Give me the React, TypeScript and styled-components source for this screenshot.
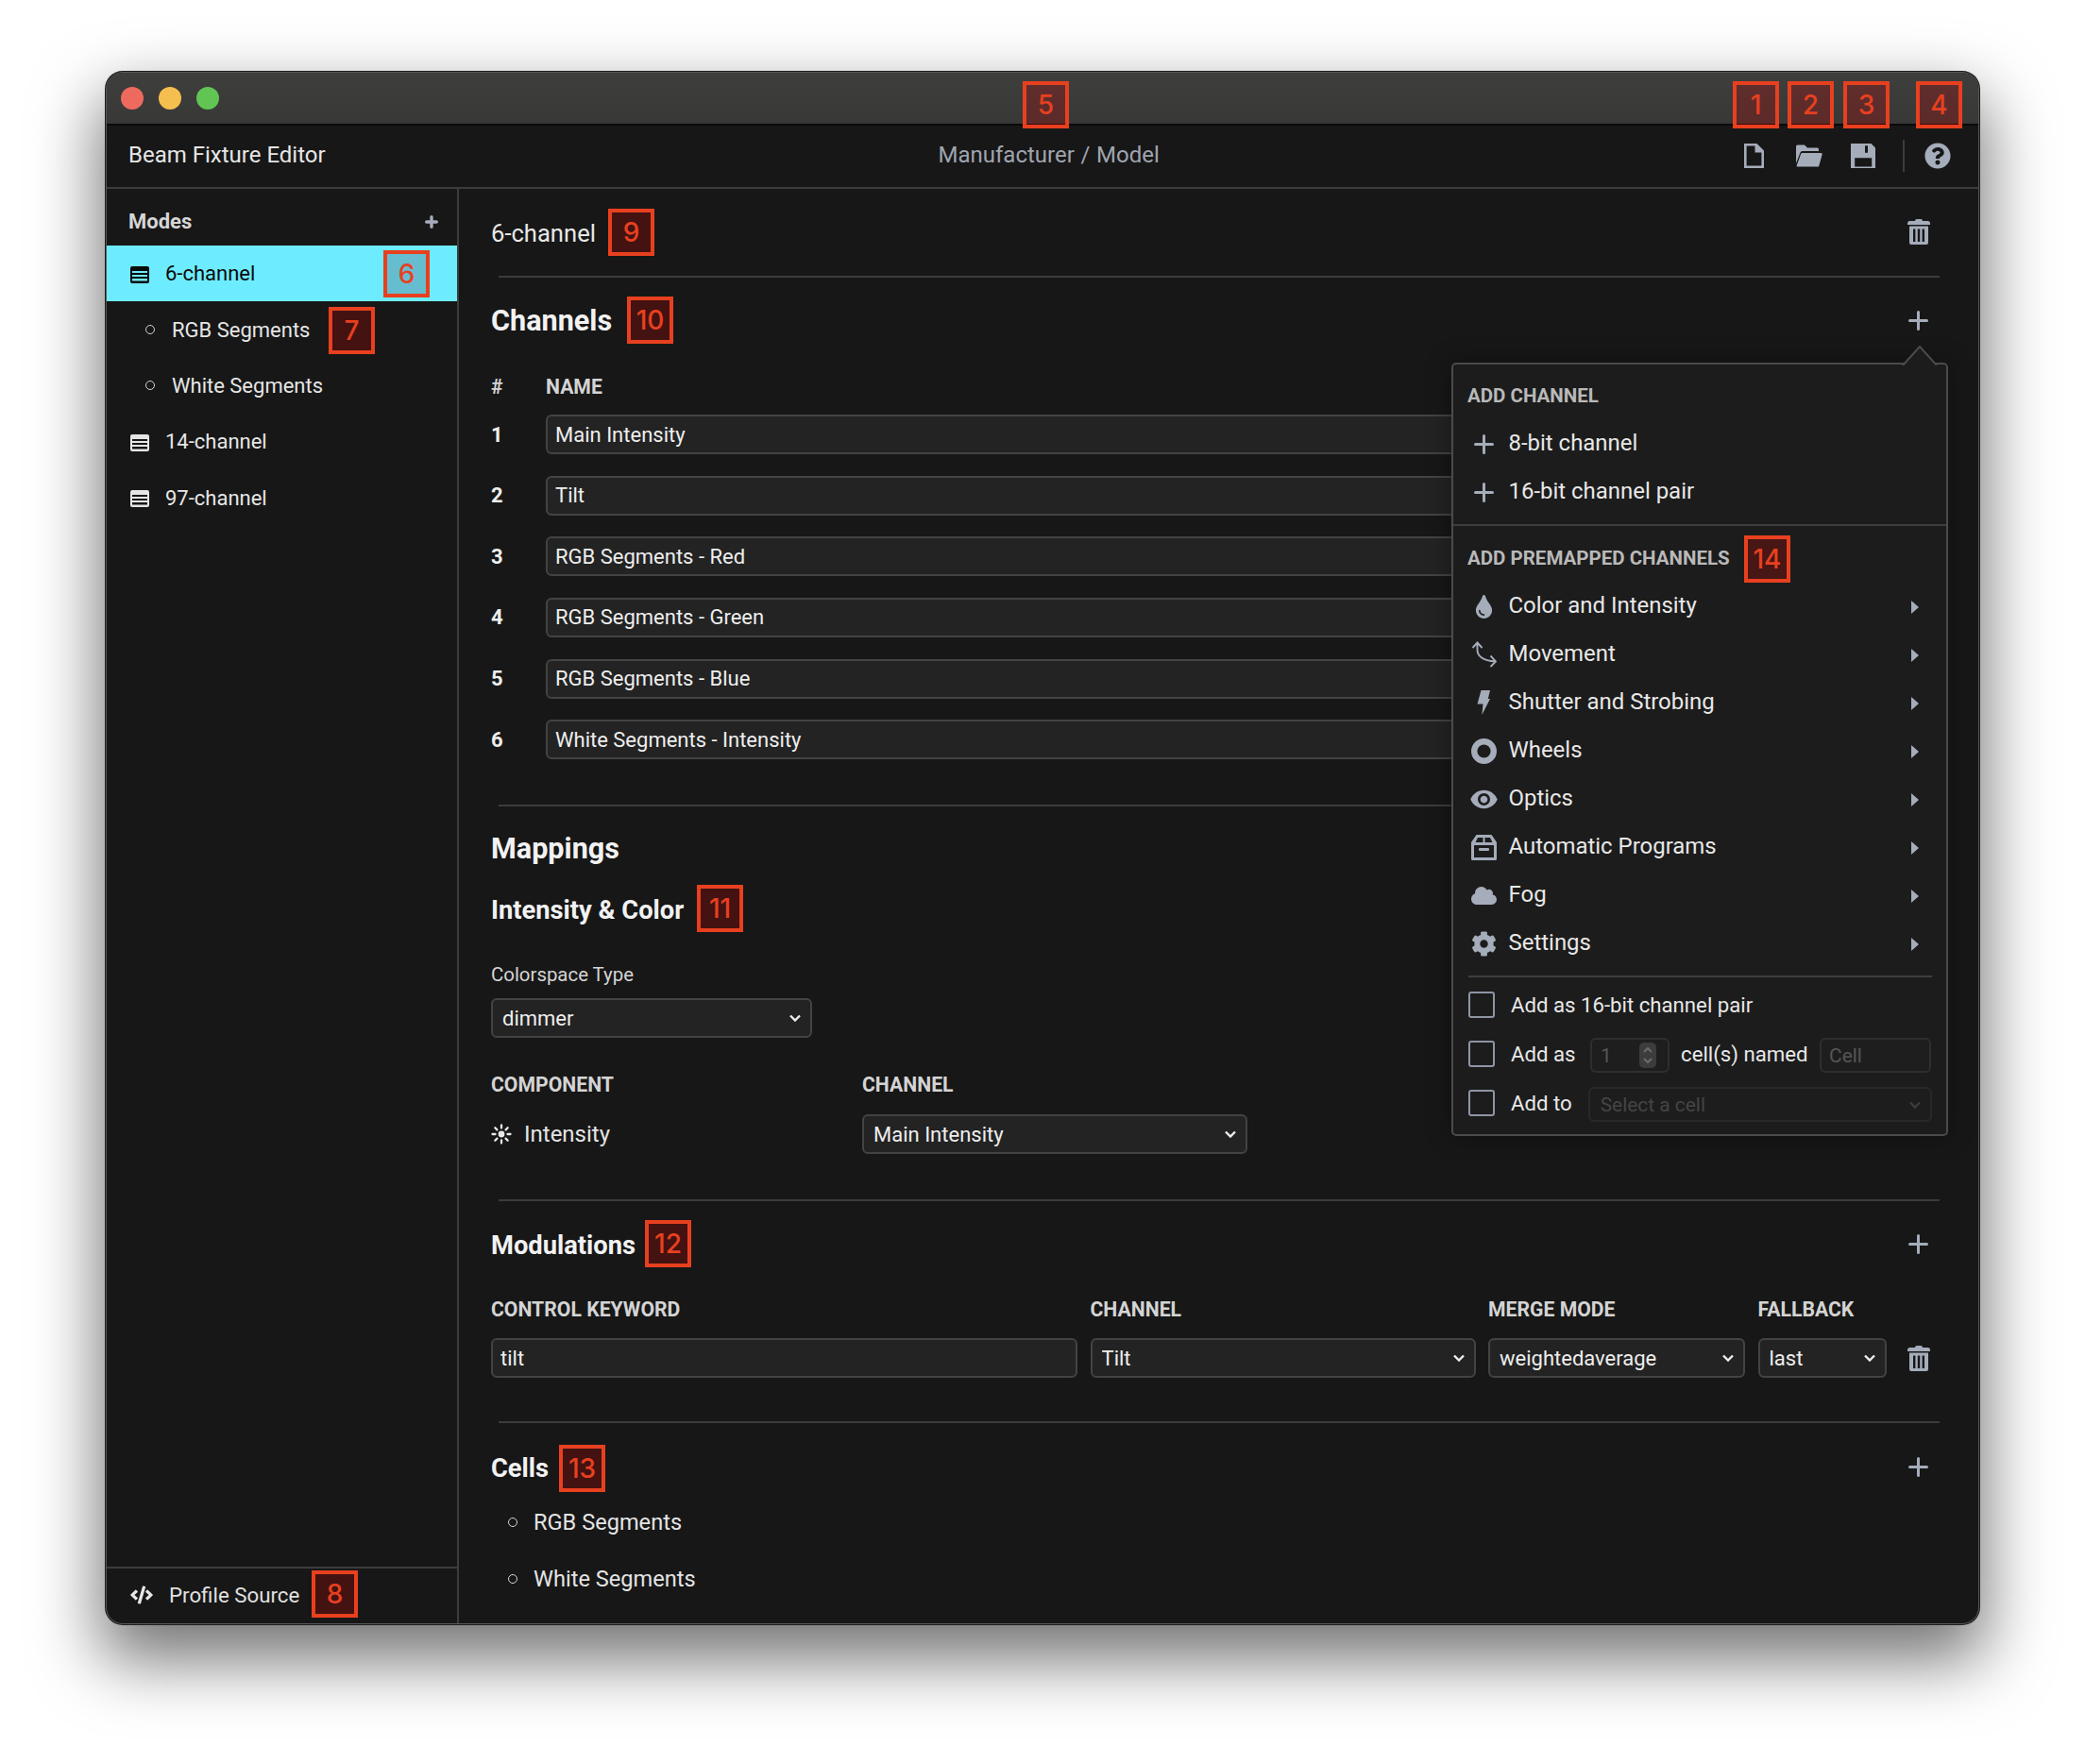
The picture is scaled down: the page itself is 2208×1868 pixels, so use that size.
import React from "react";
import styled, { createGlobalStyle } from "styled-components";
import { FaCloud, FaCode, FaCog, FaQuestionCircle, FaTint } from "react-icons/fa";
import { MdRemoveRedEye } from "react-icons/md";

const Global = createGlobalStyle`
  html, body { margin: 0; padding: 0; background: #fff; width: 2208px; height: 1868px; overflow: hidden; }
  body { font-family: Roboto, "Liberation Sans", sans-serif; }
  * { box-sizing: border-box; }
`;

const ICON = "#a5acba";
const LINE = "#3c3c3c";

const Page = styled.div`
  padding: 75.5px 0 0 111.5px;
`;
const Window = styled.div`
  position: relative;
  width: 1984px;
  height: 1644px;
  display: flex;
  flex-direction: column;
  background: #171717;
  border: 1px solid #585858;
  border-radius: 18px;
  overflow: hidden;
  box-shadow: 0 0 0 1px #1c1c1c, 0 32px 70px 6px rgba(0, 0, 0, 0.55);
`;
const TitleBar = styled.div`
  flex: 0 0 56.5px;
  display: flex;
  align-items: center;
  gap: 16px;
  padding: 0 0 0 15.5px;
  background: linear-gradient(#3e3e3d, #383837);
  border-bottom: 2px solid #0a0a0a;
`;
const Light = styled.span<{ $c: string }>`
  width: 24px;
  height: 24px;
  border-radius: 50%;
  background: ${(p) => p.$c};
`;
const Header = styled.header`
  flex: 0 0 66.5px;
  display: flex;
  align-items: center;
  padding: 0 29px 2px 23.5px;
  border-bottom: 2px solid ${LINE};
`;
const AppTitle = styled.div`
  flex: 0 0 857.5px;
  font-size: 24px;
  color: #e6e6e6;
`;
const Crumbs = styled.div`
  font-size: 24px;
  color: #a0a5ae;
  word-spacing: 0.7px;
`;
const Tools = styled.div`
  margin: 2px 0 0 auto;
  display: flex;
  align-items: center;
  color: ${ICON};
`;
const Tool = styled.span<{ $ml?: number }>`
  display: flex;
  margin-left: ${(p) => p.$ml ?? 0}px;
`;
const ToolRule = styled.span`
  width: 2px;
  height: 34px;
  margin-left: 29px;
  background: ${LINE};
`;
const Body = styled.div`
  flex: 1;
  display: flex;
  min-height: 0;
`;
const Sidebar = styled.aside`
  flex: 0 0 373.5px;
  display: flex;
  flex-direction: column;
  border-right: 2px solid ${LINE};
`;
const ModesHead = styled.div`
  flex: 0 0 60.5px;
  display: flex;
  align-items: center;
  justify-content: space-between;
  padding: 9px 20px 0 23.5px;
  font-size: 22px;
  font-weight: 700;
  color: #d6d6d6;
  svg { margin-top: 2px; }
`;
const ModeRow = styled.div<{ $active?: boolean; $sub?: boolean }>`
  height: 59.4px;
  display: flex;
  align-items: center;
  gap: ${(p) => (p.$sub ? 18 : 17)}px;
  padding-left: ${(p) => (p.$sub ? 41.5 : 25.5)}px;
  font-size: 22px;
  color: ${(p) => (p.$active ? "#0a0a0a" : "#e6e6e6")};
  background: ${(p) => (p.$active ? "#6decff" : "transparent")};
  & > svg { margin-top: 2px; }
`;
const Bullet = styled.span<{ $ml?: number }>`
  flex: none;
  width: 10px;
  height: 10px;
  border-radius: 50%;
  border: 1.6px solid #d4d4d4;
  margin-left: ${(p) => p.$ml ?? 0}px;
`;
const SideFooter = styled.div`
  margin-top: auto;
  flex: 0 0 59.5px;
  display: flex;
  align-items: center;
  gap: 17px;
  padding: 0 0 2px 25.5px;
  border-top: 2px solid ${LINE};
  font-size: 22.3px;
  color: #e0e0e0;
  svg { flex: none; width: 24px; height: 24px; color: #e6e6e6; }
`;
const Main = styled.main`
  flex: 1;
  min-width: 0;
  display: flex;
  flex-direction: column;
`;
const Divider = styled.hr<{ $mt?: number }>`
  flex: none;
  width: 1526px;
  height: 2px;
  margin: ${(p) => p.$mt ?? 0}px 0 0 42px;
  border: 0;
  background: ${LINE};
`;
const ModeTitleRow = styled.div`
  flex: 0 0 92.9px;
  display: flex;
  align-items: center;
  justify-content: space-between;
  padding: 3px 50.5px 0 34px;
  font-size: 25.6px;
  color: #e8e8e8;
  svg { margin-top: -4px; color: ${ICON}; }
`;
const Section = styled.section`
  padding: 0 52.5px 0 34px;
  flex: none;
`;
const SectionHead = styled.div<{ $h: number; $pt?: number }>`
  height: ${(p) => p.$h}px;
  padding-top: ${(p) => p.$pt ?? 0}px;
  display: flex;
  align-items: center;
  justify-content: space-between;
  color: ${ICON};
  h3 + svg { margin-top: -2px; }
`;
const H2 = styled.h2`
  margin: 0;
  font-size: 30.6px;
  font-weight: 700;
  color: #f2f2f2;
`;
const H3 = styled.h3`
  margin: 0;
  font-size: 27.3px;
  font-weight: 700;
  color: #f2f2f2;
`;
const Label = styled.div<{ $mt?: number }>`
  margin-top: ${(p) => p.$mt ?? 0}px;
  height: 30px;
  line-height: 30px;
  font-size: 21.2px;
  font-weight: 700;
  color: #d4d4d4;
  white-space: nowrap;
`;
const PlainLabel = styled(Label)`
  font-size: 20.4px;
  font-weight: 400;
`;
const TableHead = styled.div`
  height: 43.5px;
  padding-top: 11px;
  display: grid;
  grid-template-columns: 58px 1fr;
`;
const ChannelRow = styled.div`
  height: 64.6px;
  display: grid;
  grid-template-columns: 58px 1fr;
  align-items: center;
  font-size: 22px;
  font-weight: 700;
  color: #eeeeee;
`;
const TextField = styled.input`
  display: block;
  width: 100%;
  height: 42px;
  padding: 0 8px;
  font: 400 22px Roboto, sans-serif;
  color: #eeeeee;
  background: #232323;
  border: 2px solid #434343;
  border-radius: 6px;
  outline: none;
`;
const SelectWrap = styled.div<{ $w?: number; $mt?: number; $disabled?: boolean }>`
  position: relative;
  width: ${(p) => (p.$w ? `${p.$w}px` : "100%")};
  margin-top: ${(p) => p.$mt ?? 0}px;
  color: ${(p) => (p.$disabled ? "#3c3c3c" : "#eeeeee")};
`;
const NativeSelect = styled.select`
  display: block;
  width: 100%;
  height: 42px;
  padding: 0 30px 0 10px;
  appearance: none;
  font: 400 22px Roboto, sans-serif;
  color: #eeeeee;
  background: #232323;
  border: 2px solid #434343;
  border-radius: 6px;
  outline: none;
  &:disabled {
    height: 37px;
    color: #565656;
    background: #1e1e1e;
    border-color: #2e2e2e;
    font-size: 20.9px;
    padding-left: 11px;
  }
`;
const Caret = styled.svg`
  position: absolute;
  right: 12px;
  top: 50%;
  width: 12px;
  height: 8px;
  margin-top: -4px;
  pointer-events: none;
  fill: none;
  stroke: currentColor;
  stroke-width: 2.4;
`;
const ComponentGrid = styled.div`
  display: grid;
  grid-template-columns: 393px 408px;
`;
const IntensityCell = styled.div`
  margin-top: 16px;
  height: 42px;
  display: flex;
  align-items: center;
  gap: 13px;
  font-size: 24px;
  color: #e4e4e4;
  svg { flex: none; color: #e8e8e8; }
`;
const ModGrid = styled.div`
  margin-top: 7px;
  display: grid;
  grid-template-columns: 621px 408px 272px 136px 42px;
  column-gap: 13.5px;
  row-gap: 15px;
  align-items: center;
`;
const CellTrash = styled.span`
  justify-self: center;
  display: flex;
  color: ${ICON};
`;
const CellRow = styled.div`
  height: 60px;
  display: flex;
  align-items: center;
  gap: 17px;
  font-size: 23.6px;
  color: #e4e4e4;
`;
const Popover = styled.div`
  position: absolute;
  z-index: 2;
  left: 1424.5px;
  top: 307.5px;
  width: 526px;
  background: #1c1c1c;
  border: 2px solid #4b4b4b;
  border-radius: 5px;
  box-shadow: 0 0 26px rgba(0, 0, 0, 0.35);
  padding-bottom: 7px;
`;
const PopCaret = styled.svg`
  position: absolute;
  right: 9px;
  top: -20px;
  width: 38px;
  height: 21px;
  fill: #1c1c1c;
  stroke: #4b4b4b;
  stroke-width: 2;
`;
const PopLabel = styled.div<{ $h: number; $pt: number }>`
  height: ${(p) => p.$h}px;
  padding: ${(p) => p.$pt}px 0 0 15px;
  display: flex;
  align-items: center;
  font-size: 20.5px;
  font-weight: 700;
  color: #b9b9b9;
`;
const PopItem = styled.div`
  height: 51px;
  display: flex;
  align-items: center;
  gap: 13px;
  padding: 0 29px 0 18.5px;
  font-size: 23.95px;
  color: #e8e8e8;
`;
const IconSlot = styled.span`
  flex: 0 0 27px;
  min-width: 0;
  width: 27px;
  margin-top: 2px;
  display: flex;
  justify-content: center;
  align-items: center;
  color: ${ICON};
  svg { flex: none; }
`;
const Arrow = styled.span`
  margin: 3px 0 0 auto;
  width: 0;
  height: 0;
  border-left: 8.5px solid ${ICON};
  border-top: 7px solid transparent;
  border-bottom: 7px solid transparent;
`;
const PopRule = styled.hr<{ $inset?: boolean }>`
  height: 2px;
  margin: 9.5px ${(p) => (p.$inset ? 15 : 0)}px 0 ${(p) => (p.$inset ? 16 : 0)}px;
  border: 0;
  background: #3e3e3e;
`;
const OptionRow = styled.div<{ $first?: boolean }>`
  height: 52px;
  margin-top: ${(p) => (p.$first ? 3 : 0)}px;
  display: flex;
  align-items: center;
  padding: 0 15px 0 16px;
  font-size: 22.2px;
  color: #e8e8e8;
  white-space: nowrap;
`;
const Check = styled.input.attrs({ type: "checkbox" })`
  flex: none;
  appearance: none;
  width: 28px;
  height: 28px;
  margin: 0 17px 0 0;
  border: 2px solid #8e95a4;
  border-radius: 3px;
  background: transparent;
`;
const NumberBox = styled.div`
  flex: none;
  width: 84px;
  height: 37px;
  margin: 3.5px 12px 0 15.5px;
  display: flex;
  align-items: center;
  justify-content: space-between;
  padding: 0 12px 0 9px;
  font-size: 20.9px;
  color: #565656;
  background: #1e1e1e;
  border: 2px solid #2e2e2e;
  border-radius: 6px;
`;
const Stepper = styled.span`
  width: 18px;
  height: 27px;
  display: flex;
  background: #3c3c3c;
  border-radius: 5px;
  svg { display: block; fill: none; stroke: #6a6a6a; stroke-width: 2.2; }
`;
const CellName = styled.input`
  flex: none;
  width: 118px;
  height: 37px;
  margin: 3.5px 0 0 12.5px;
  padding: 0 8px;
  font: 400 20.9px Roboto, sans-serif;
  background: #1e1e1e;
  border: 2px solid #2e2e2e;
  border-radius: 6px;
  outline: none;
  &::placeholder { color: #565656; opacity: 1; }
`;
const RightSelect = styled(SelectWrap)`
  flex: 1;
  margin: 3.5px 0 0 17px;
  width: auto;
`;
const Badge = styled.div<{ $x: number; $y: number; $accent?: boolean }>`
  position: absolute;
  z-index: 3;
  left: ${(p) => p.$x - 112.5}px;
  top: ${(p) => p.$y - 76.5}px;
  width: 49px;
  height: 50px;
  display: flex;
  align-items: center;
  justify-content: center;
  font: 500 28px Inter, "Liberation Sans", sans-serif;
  color: #e8401f;
  border: 4px solid #e8401f;
  background: ${(p) => (p.$accent ? "#66bdd0" : "rgba(200, 5, 0, 0.25)")};
`;

const Plus = ({ size = 21, w = 3 }: { size?: number; w?: number }) => (
  <svg width={size} height={size} viewBox={`0 0 ${size} ${size}`} fill="none" stroke={ICON} strokeWidth={w} strokeLinecap="round">
    <path d={`M${size / 2} ${w / 2}V${size - w / 2}M${w / 2} ${size / 2}H${size - w / 2}`} />
  </svg>
);
const DocIcon = () => (
  <svg width="21" height="26" viewBox="0 0 21 26" fill="currentColor">
    <path fillRule="evenodd" d="M0 0H13.5L21 7.5V26H0ZM2.6 2.6V23.4H18.4V9.5H11.5V2.6Z" />
  </svg>
);
const FolderIcon = () => (
  <svg width="28" height="24" viewBox="0 0 28 24" fill="currentColor">
    <path d="M0 2.2Q0 .5 1.6.5H9L12 3.5H22.6Q24 3.5 24 5V7H6.6Q5 7 4.5 8.6L0 20Z" />
    <path d="M6.7 9H26.6Q28 9 27.7 10.5L24.3 22.4Q24 23.6 22.7 23.6H1.6Q.3 23.6 .7 22.3L5 10.2Q5.4 9 6.7 9Z" />
  </svg>
);
const SaveIcon = () => (
  <svg width="26" height="26" viewBox="0 0 26 26" fill="currentColor">
    <path fillRule="evenodd" d="M0 0H21.5L26 4.5V26H0ZM15 2.2V9.8H18V2.2ZM4.2 15.2V24.4H22.2V15.2Z" />
  </svg>
);
const TrashIcon = () => (
  <svg width="24" height="27" viewBox="0 0 24 27" fill="currentColor">
    <path d="M8 2Q8 0 10 0H14Q16 0 16 2H22Q24 2 24 4.5V6H0V4.5Q0 2 2 2Z" />
    <path fillRule="evenodd" d="M2 7.5H22V25Q22 27 20 27H4Q2 27 2 25ZM6 10.5V24H8.4V10.5ZM10.8 10.5V24H13.2V10.5ZM15.6 10.5V24H18V10.5Z" />
  </svg>
);
const ModeIcon = () => (
  <svg width="20" height="18" viewBox="0 0 20 18" fill="currentColor">
    <path fillRule="evenodd" d="M2 0H18Q20 0 20 2V16Q20 18 18 18H2Q0 18 0 16V2Q0 0 2 0ZM2 5V7H18V5ZM2 9V11H18V9ZM2 13V15.5H18V13Z" />
  </svg>
);
const MoveIcon = () => (
  <svg width="27" height="28" viewBox="0 0 27 28" fill="none" stroke="currentColor" strokeWidth="1.9">
    <path d="M1.5 7L6.5 1.5L11.5 7M6.5 2V9C6.5 15 11.5 21 25.5 21.5M20.5 15.5L26 21.5L20.5 27" />
  </svg>
);
const FlashIcon = () => (
  <svg width="14" height="26" viewBox="0 0 14 26" fill="currentColor">
    <path d="M4.5 0H14L11.8 9H14L5.4 26L6.5 14.5H0.5Z" />
  </svg>
);
const RingIcon = () => (
  <svg width="27" height="27" viewBox="0 0 27 27" fill="none" stroke="currentColor" strokeWidth="6.4">
    <circle cx="13.5" cy="13.5" r="10.3" />
  </svg>
);
const BoxIcon = () => (
  <svg width="27" height="27" viewBox="0 0 27 27" fill="currentColor">
    <path fillRule="evenodd" d="M5.5 0H21.5L27 8V25.5Q27 27 25.5 27H1.5Q0 27 0 25.5V8ZM3 11V24H24V11ZM7 3L4.5 8H12.5V3ZM14.5 3V8H22.5L20 3Z" />
    <rect x="8" y="14" width="11" height="3" rx="1" />
  </svg>
);
const SunIcon = () => (
  <svg width="22" height="22" viewBox="0 0 22 22" fill="none" stroke="currentColor" strokeWidth="2.3" strokeLinecap="round">
    <circle cx="11" cy="11" r="3.4" fill="currentColor" stroke="none" />
    <path d="M11 1.5V4.5M11 17.5V20.5M1.5 11H4.5M17.5 11H20.5M4.3 4.3L6.4 6.4M15.6 15.6L17.7 17.7M4.3 17.7L6.4 15.6M15.6 6.4L17.7 4.3" />
  </svg>
);
const Chevron = () => (
  <Caret viewBox="0 0 12 8">
    <path d="M1 1.5L6 6.5L11 1.5" />
  </Caret>
);
const Select = ({ value, w, mt }: { value: string; w?: number; mt?: number }) => (
  <SelectWrap $w={w} $mt={mt}>
    <NativeSelect defaultValue={value}>
      <option>{value}</option>
    </NativeSelect>
    <Chevron />
  </SelectWrap>
);

const badges: { n: string; x: number; y: number; accent?: boolean }[] = [
  { n: "1", x: 1835, y: 86 },
  { n: "2", x: 1893, y: 86 },
  { n: "3", x: 1952, y: 86 },
  { n: "4", x: 2029, y: 86 },
  { n: "5", x: 1083, y: 86 },
  { n: "6", x: 406, y: 265, accent: true },
  { n: "7", x: 348, y: 325 },
  { n: "8", x: 330, y: 1663 },
  { n: "9", x: 644, y: 221 },
  { n: "10", x: 664, y: 314 },
  { n: "11", x: 738, y: 937 },
  { n: "12", x: 683, y: 1292 },
  { n: "13", x: 592, y: 1530 },
  { n: "14", x: 1847, y: 567 },
];

const channels = [
  "Main Intensity",
  "Tilt",
  "RGB Segments - Red",
  "RGB Segments - Green",
  "RGB Segments - Blue",
  "White Segments - Intensity",
];

const premapped: { label: string; icon: React.ReactNode }[] = [
  { label: "Color and Intensity", icon: <FaTint size={25} /> },
  { label: "Movement", icon: <MoveIcon /> },
  { label: "Shutter and Strobing", icon: <FlashIcon /> },
  { label: "Wheels", icon: <RingIcon /> },
  { label: "Optics", icon: <MdRemoveRedEye size={31} /> },
  { label: "Automatic Programs", icon: <BoxIcon /> },
  { label: "Fog", icon: <FaCloud size={27} /> },
  { label: "Settings", icon: <FaCog size={27} /> },
];

export default function App() {
  return (
    <Page>
      <Global />
      <Window>
        <TitleBar>
          <Light $c="#ee6a5f" />
          <Light $c="#f5bf4f" />
          <Light $c="#61c554" />
        </TitleBar>
        <Header>
          <AppTitle>Beam Fixture Editor</AppTitle>
          <Crumbs>Manufacturer / Model</Crumbs>
          <Tools>
            <Tool><DocIcon /></Tool>
            <Tool $ml={34}><FolderIcon /></Tool>
            <Tool $ml={30}><SaveIcon /></Tool>
            <ToolRule />
            <Tool $ml={21}><FaQuestionCircle size={28} /></Tool>
          </Tools>
        </Header>
        <Body>
          <Sidebar>
            <ModesHead>
              Modes
              <Plus size={14} w={3.4} />
            </ModesHead>
            <ModeRow $active><ModeIcon />6-channel</ModeRow>
            <ModeRow $sub><Bullet />RGB Segments</ModeRow>
            <ModeRow $sub><Bullet />White Segments</ModeRow>
            <ModeRow><ModeIcon />14-channel</ModeRow>
            <ModeRow><ModeIcon />97-channel</ModeRow>
            <SideFooter>
              <FaCode />
              Profile Source
            </SideFooter>
          </Sidebar>
          <Main>
            <ModeTitleRow>
              6-channel
              <TrashIcon />
            </ModeTitleRow>
            <Divider />
            <Section>
              <SectionHead $h={90}>
                <H2>Channels</H2>
                <Plus />
              </SectionHead>
              <TableHead>
                <Label>#</Label>
                <Label>NAME</Label>
              </TableHead>
              {channels.map((c, i) => (
                <ChannelRow key={c}>
                  <span>{i + 1}</span>
                  <TextField defaultValue={c} />
                </ChannelRow>
              ))}
            </Section>
            <Divider $mt={36.3} />
            <Section>
              <SectionHead $h={89}>
                <H2>Mappings</H2>
              </SectionHead>
              <SectionHead $h={39} $pt={4}>
                <H3>Intensity &amp; Color</H3>
              </SectionHead>
              <PlainLabel $mt={35.4}>Colorspace Type</PlainLabel>
              <Select value="dimmer" w={340} mt={10} />
              <ComponentGrid>
                <Label $mt={35}>COMPONENT</Label>
                <Label $mt={35}>CHANNEL</Label>
                <IntensityCell>
                  <SunIcon />
                  Intensity
                </IntensityCell>
                <Select value="Main Intensity" mt={16} />
              </ComponentGrid>
            </Section>
            <Divider $mt={48} />
            <Section>
              <SectionHead $h={93}>
                <H3>Modulations</H3>
                <Plus />
              </SectionHead>
              <ModGrid>
                <Label>CONTROL KEYWORD</Label>
                <Label>CHANNEL</Label>
                <Label>MERGE MODE</Label>
                <Label>FALLBACK</Label>
                <span />
                <TextField defaultValue="tilt" />
                <Select value="Tilt" />
                <Select value="weightedaverage" />
                <Select value="last" />
                <CellTrash><TrashIcon /></CellTrash>
              </ModGrid>
            </Section>
            <Divider $mt={46} />
            <Section>
              <SectionHead $h={75} $pt={20}>
                <H3>Cells</H3>
                <Plus />
              </SectionHead>
              <CellRow><Bullet $ml={18} />RGB Segments</CellRow>
              <CellRow><Bullet $ml={18} />White Segments</CellRow>
            </Section>
          </Main>
        </Body>

        <Popover>
          <PopCaret viewBox="0 0 38 21">
            <path d="M1 21L19 1L37 21" />
          </PopCaret>
          <PopLabel $h={57.5} $pt={8}>ADD CHANNEL</PopLabel>
          <PopItem><IconSlot><Plus /></IconSlot>8-bit channel</PopItem>
          <PopItem><IconSlot><Plus /></IconSlot>16-bit channel pair</PopItem>
          <PopRule />
          <PopLabel $h={58.5} $pt={10}>ADD PREMAPPED CHANNELS</PopLabel>
          {premapped.map((m) => (
            <PopItem key={m.label}>
              <IconSlot>{m.icon}</IconSlot>
              {m.label}
              <Arrow />
            </PopItem>
          ))}
          <PopRule $inset />
          <OptionRow $first>
            <Check />
            Add as 16-bit channel pair
          </OptionRow>
          <OptionRow>
            <Check />
            Add as
            <NumberBox>
              1
              <Stepper>
                <svg width="18" height="27" viewBox="0 0 18 27">
                  <path d="M5 10L9 6L13 10M5 17L9 21L13 17" />
                </svg>
              </Stepper>
            </NumberBox>
            cell(s) named
            <CellName placeholder="Cell" disabled />
          </OptionRow>
          <OptionRow>
            <Check />
            Add to
            <RightSelect $disabled>
              <NativeSelect disabled defaultValue="Select a cell">
                <option>Select a cell</option>
              </NativeSelect>
              <Chevron />
            </RightSelect>
          </OptionRow>
        </Popover>

        {badges.map((b) => (
          <Badge key={b.n} $x={b.x} $y={b.y} $accent={b.accent}>
            {b.n}
          </Badge>
        ))}
      </Window>
    </Page>
  );
}
